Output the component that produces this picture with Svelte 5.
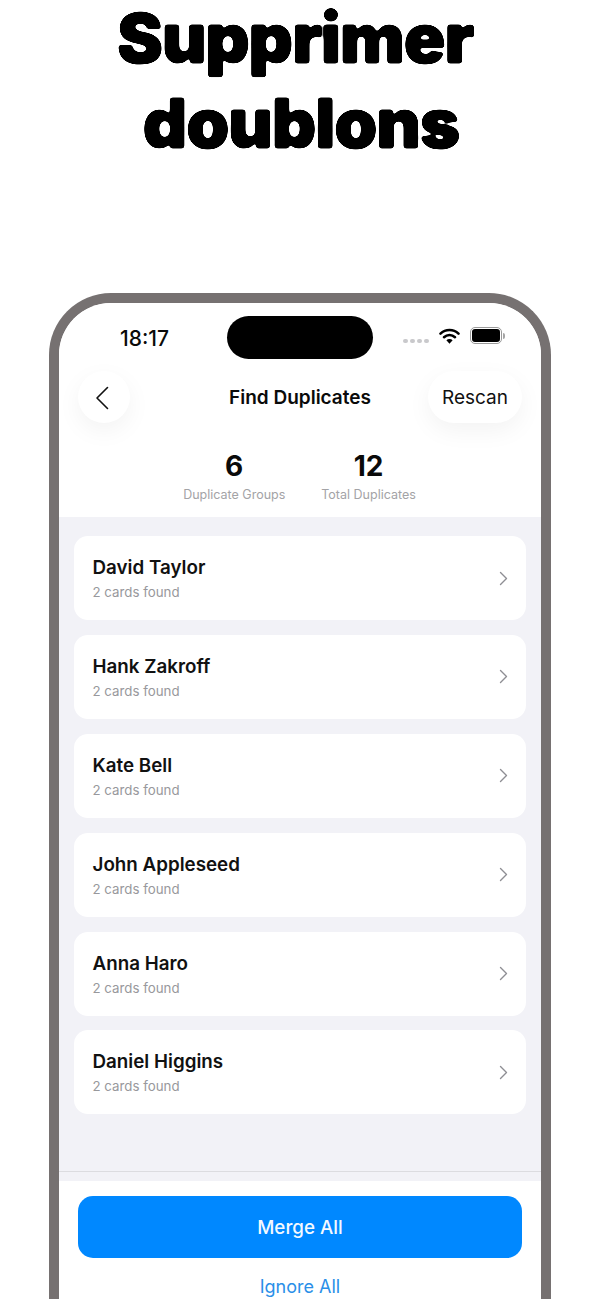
<script lang="ts">
	const groups = ['David Taylor', 'Hank Zakroff', 'Kate Bell', 'John Appleseed', 'Anna Haro', 'Daniel Higgins'];
</script>

<div class="page">
	<svg class="defs" width="0" height="0" aria-hidden="true">
		<filter id="soften" x="-5%" y="-5%" width="110%" height="110%">
			<feGaussianBlur stdDeviation="1.4" />
			<feComponentTransfer>
				<feFuncA type="linear" slope="7" intercept="-3" />
			</feComponentTransfer>
		</filter>
	</svg>

	<h1><span class="line-a">Supprimer</span><span class="line-b">doublons</span></h1>

	<div class="phone">
		<div class="screen">
			<header class="top">
				<div class="status">
					<span class="time">18:17</span>
					<div class="island"></div>
					<div class="indicators">
						<div class="dots"><i></i><i></i><i></i><i></i></div>
						<svg class="wifi" width="21" height="16" viewBox="0 0 21 16">
							<path d="M1.5 5.6a13 13 0 0 1 18 0" fill="none" stroke="#000" stroke-width="2.6" stroke-linecap="round" />
							<path d="M5 9.2a8 8 0 0 1 11 0" fill="none" stroke="#000" stroke-width="2.6" stroke-linecap="round" />
							<path d="M7.4 12.2a4.4 4.4 0 0 1 6.2 0l-3.1 3.6z" fill="#000" />
						</svg>
						<div class="battery"><div class="cell"></div><div class="nub"></div></div>
					</div>
				</div>

				<div class="nav">
					<button class="back" aria-label="Back">
						<svg width="14" height="24" viewBox="0 0 14 24" fill="none" stroke="#111" stroke-width="1.6" stroke-linecap="round" stroke-linejoin="round">
							<path d="M12.5 1.5 2 12l10.5 10.5" />
						</svg>
					</button>
					<span class="nav-title">Find Duplicates</span>
					<button class="rescan">Rescan</button>
				</div>

				<div class="stats">
					<div class="stat"><strong>6</strong><span>Duplicate Groups</span></div>
					<div class="stat"><strong>12</strong><span>Total Duplicates</span></div>
				</div>
			</header>

			<main class="list">
				{#each groups as name}
					<div class="card">
						<div class="card-text">
							<div class="name">{name}</div>
							<div class="found">2 cards found</div>
						</div>
						<svg width="9" height="15" viewBox="0 0 9 15" fill="none" stroke="#8e8e93" stroke-width="1.4" stroke-linecap="round" stroke-linejoin="round">
							<path d="M1.5 1.5 7.5 7.5l-6 6" />
						</svg>
					</div>
				{/each}
			</main>

			<footer class="actions">
				<button class="merge">Merge All</button>
				<button class="ignore">Ignore All</button>
			</footer>
		</div>
	</div>
</div>

<style>
	:global(body) {
		margin: 0;
		background: #fff;
	}

	.page {
		width: 600px;
		height: 1299px;
		overflow: hidden;
		background: #fff;
		font-family: Inter, 'Liberation Sans', sans-serif;
		color: #0a0a0a;
	}

	.defs {
		display: block;
		height: 0;
	}

	h1 {
		box-sizing: border-box;
		height: 293px;
		margin: 0;
		text-align: center;
		font-size: 69px;
		font-weight: 900;
		letter-spacing: -1.2px;
		color: #000;
		-webkit-text-stroke: 1.2px #000;
		filter: url(#soften);
	}

	h1 span {
		display: block;
	}

	.line-a {
		padding-right: 10px;
		line-height: 76px;
	}

	.line-b {
		padding-left: 2px;
		margin-top: 5px;
		line-height: 85px;
	}

	.phone {
		box-sizing: border-box;
		width: 502px;
		height: 1060px;
		margin: 0 auto;
		border: 10px solid #767171;
		border-bottom: 0;
		border-radius: 62px 62px 0 0;
		overflow: hidden;
		background: #fff;
	}

	.screen {
		display: flex;
		flex-direction: column;
		height: 100%;
	}

	/* ── Top ──────────────────────────────────────── */
	.top {
		box-sizing: border-box;
		height: 214px;
		flex-shrink: 0;
		background: #fff;
	}

	.status {
		display: grid;
		grid-template-columns: 1fr 146px 1fr;
		height: 43px;
		padding-top: 13px;
		align-items: center;
	}

	.time {
		font-size: 21px;
		font-weight: 500;
		padding-left: 61px;
		padding-top: 2px;
	}

	.island {
		height: 43px;
		border-radius: 22px;
		background: #000;
	}

	.indicators {
		display: flex;
		align-items: center;
		padding-left: 30px;
		margin-top: -4px;
	}

	.dots {
		display: flex;
		gap: 2.5px;
		margin-top: 11px;
		margin-right: 10px;
	}

	.dots i {
		width: 4.5px;
		height: 4.5px;
		border-radius: 50%;
		background: #c9c9cc;
	}

	.wifi {
		margin-right: 10px;
	}

	.battery {
		display: flex;
		align-items: center;
		gap: 1px;
	}

	.cell {
		box-sizing: border-box;
		width: 32px;
		height: 17px;
		border: 2.5px solid #fff;
		outline: 1.2px solid #9a9a9a;
		outline-offset: -1.2px;
		border-radius: 5px;
		background: #000;
	}

	.nub {
		width: 2px;
		height: 6px;
		border-radius: 0 2px 2px 0;
		background: #a5a5a5;
	}

	.nav {
		display: grid;
		grid-template-columns: 1fr auto 1fr;
		align-items: center;
		margin-top: 12px;
		padding: 0 19px;
		height: 52px;
	}

	button {
		border: 0;
		font-family: inherit;
		cursor: pointer;
	}

	.back,
	.rescan {
		height: 52px;
		background: #fff;
		border-radius: 26px;
		box-shadow: 0 8px 24px rgba(0, 0, 0, 0.05);
		color: #111;
	}

	.back {
		width: 52px;
		padding: 2px 5px 0 0;
		display: flex;
		align-items: center;
		justify-content: center;
	}

	.rescan {
		justify-self: end;
		width: 94px;
		padding: 0;
		font-size: 19px;
	}

	.nav-title {
		font-size: 19px;
		font-weight: 600;
	}

	.stats {
		display: flex;
		justify-content: center;
		gap: 36px;
		margin-top: 26px;
		margin-left: -1px;
	}

	.stat {
		display: flex;
		flex-direction: column;
		align-items: center;
	}

	.stat strong {
		font-size: 28px;
		line-height: 34px;
		font-weight: 700;
	}

	.stat span {
		margin-top: 4px;
		font-size: 12.5px;
		line-height: 16px;
		color: #a3a3a6;
	}

	/* ── List ─────────────────────────────────────── */
	.list {
		display: flex;
		flex-direction: column;
		gap: 14.9px;
		padding: 19px 15px 0;
		background: #f2f2f7;
		border-bottom: 1px solid #dcdce0;
		box-sizing: border-box;
		height: 655px;
		flex: none;
	}

	.card {
		box-sizing: border-box;
		height: 84px;
		flex-shrink: 0;
		display: flex;
		align-items: center;
		justify-content: space-between;
		padding: 0 18.5px;
		border-radius: 14px;
		background: #fff;
	}

	.card-text {
		padding-top: 1px;
	}

	.name {
		font-size: 18.8px;
		line-height: 24px;
		font-weight: 600;
		color: #111;
	}

	.found {
		margin-top: 4px;
		font-size: 13.3px;
		line-height: 17px;
		color: #98989c;
	}

	/* ── Footer ───────────────────────────────────── */
	.actions {
		display: flex;
		flex-direction: column;
		align-items: center;
		border-top: 9px solid #f2f2f7;
		padding: 15px 19px 0;
		background: #fff;
	}

	.merge {
		width: 100%;
		height: 62px;
		flex-shrink: 0;
		border-radius: 15px;
		background: #0088ff;
		color: #f4f9ff;
		font-size: 18.8px;
		font-weight: 500;
	}

	.ignore {
		margin-top: 17px;
		padding: 0;
		background: none;
		color: #2a8fe8;
		font-size: 18px;
		line-height: 24px;
	}
</style>
